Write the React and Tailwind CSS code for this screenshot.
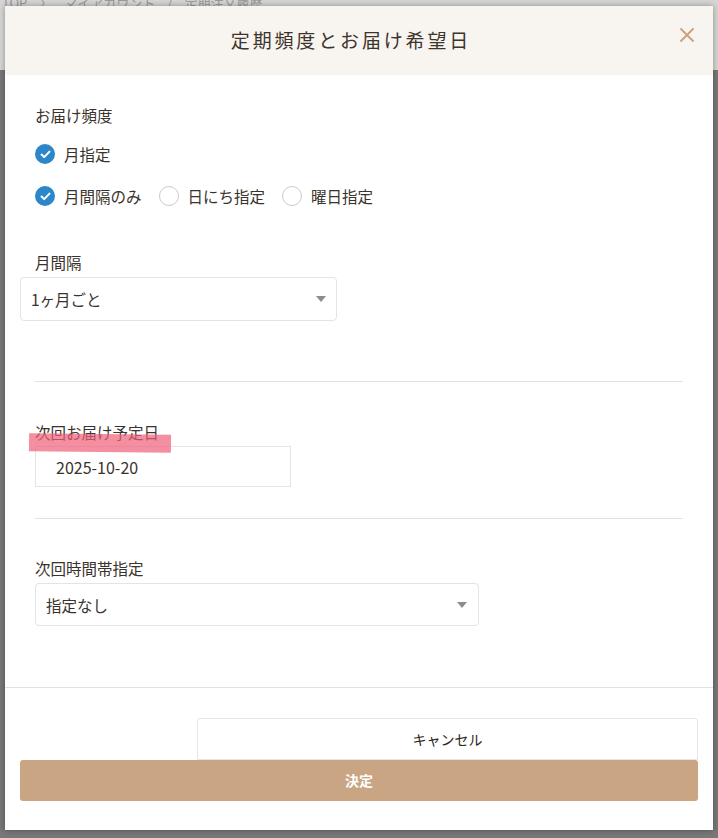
import React from "react";

const Check = ({ checked }) => (
    <span
        className={
            checked
                ? "flex h-[20px] w-[20px] shrink-0 items-center justify-center rounded-full bg-[#2b87c9]"
                : "flex h-[20px] w-[20px] shrink-0 rounded-full border border-[#cfcac4] bg-white"
        }>
        {checked && (
            <svg width="11" height="9" viewBox="0 0 11 9" fill="none">
                <path d="M1.5 4.6 L4.2 7.1 L9.5 1.6" stroke="#fff" strokeWidth="2" strokeLinecap="round" strokeLinejoin="round"/>
            </svg>
        )}
    </span>
);

const Option = ({ checked, label }) => (
    <label className="flex items-center gap-[9px]">
        <Check checked={checked}/>
        <span>{label}</span>
    </label>
);

const Arrow = () => (
    <svg width="10" height="6" viewBox="0 0 10 6">
        <path d="M0 0 H10 L5 6 Z" fill="#8c8c8c"/>
    </svg>
);

const App = () => {
    return (
        <div className="relative h-[838px] w-[718px] overflow-hidden bg-[#787878] font-['Noto_Sans_CJK_JP','Noto_Sans',sans-serif] text-[#3a322c]">
            {/* page behind the dialog */}
            <div className="flex h-[70px] items-start gap-3 bg-[#d6d6d6] px-[2px] text-[13px] leading-[10px] text-[#9a9a9a]">
                <span className="mt-[-2px]">TOP</span>
                <span className="mt-[-2px]">〉</span>
                <span className="mt-[-2px] underline">マイアカウント</span>
                <span className="mt-[-2px]">/</span>
                <span className="mt-[-2px]">定期注文履歴</span>
            </div>

            <div className="absolute left-[5px] top-[6px] flex h-[824px] w-[708px] flex-col bg-white shadow-[0_0_6px_rgba(0,0,0,0.35)]">
                <div className="relative flex h-[69px] shrink-0 items-center justify-center bg-[#f8f5f1] pr-[16px]">
                    <h2 className="text-[19px] tracking-[0.15em] text-[#3d342c]">定期頻度とお届け希望日</h2>
                    <button className="absolute right-[18px] top-[21px] text-[#c9a17c]">
                        <svg width="16" height="16" viewBox="0 0 16 16">
                            <path d="M1.5 1.5 L14.5 14.5 M14.5 1.5 L1.5 14.5" stroke="#c9a17c" strokeWidth="1.8"/>
                        </svg>
                    </button>
                </div>

                <div className="flex flex-col px-[30px] pt-[28px] text-[15.5px] leading-[24px]">
                    <p>お届け頻度</p>
                    <div className="mt-[15px]">
                        <Option checked label="月指定"/>
                    </div>
                    <div className="mt-[18px] flex items-center gap-[17px]">
                        <Option checked label="月間隔のみ"/>
                        <Option label="日にち指定"/>
                        <Option label="曜日指定"/>
                    </div>

                    <p className="mt-[42px]">月間隔</p>
                    <div className="ml-[-15px] mt-[3px] flex h-[44px] w-[317px] items-center justify-between rounded-[4px] border border-[#e4e4e4] pl-[10px] pr-[10px]">
                        <span>1ヶ月ごと</span>
                        <Arrow/>
                    </div>

                    <hr className="mt-[60px] border-[#e2e2e2]"/>

                    <div className="relative">
                        <p className="mt-[38px]">次回お届け予定日</p>
                        <div className="mt-[2px] flex h-[41px] w-[256px] items-center border border-[#e4e4e4] pl-[20px] text-[16px]">
                            2025-10-20
                        </div>
                        <div className="absolute left-[-6px] top-[52px] h-[18px] w-[142px] rotate-[0.6deg] bg-[#ee5f78] opacity-70"/>
                    </div>

                    <hr className="mt-[31px] border-[#e2e2e2]"/>

                    <p className="mt-[37px]">次回時間帯指定</p>
                    <div className="mt-[3px] flex h-[43px] w-[444px] items-center justify-between rounded-[4px] border border-[#e4e4e4] pl-[10px] pr-[11px]">
                        <span>指定なし</span>
                        <Arrow/>
                    </div>
                </div>

                <div className="mt-[61px] flex flex-col items-end border-t border-[#e2e2e2] px-[15px] pt-[30px]">
                    <button className="flex h-[42px] w-[501px] items-center justify-center rounded-t-[3px] border border-[#e6e6e6] bg-white text-[14px] text-[#2b2520]">
                        キャンセル
                    </button>
                    <button className="flex h-[41px] w-[678px] items-center justify-center rounded-[3px] bg-[#c9a584] text-[14px] font-bold text-white">
                        決定
                    </button>
                </div>
            </div>
        </div>
    );
};

export default App;
